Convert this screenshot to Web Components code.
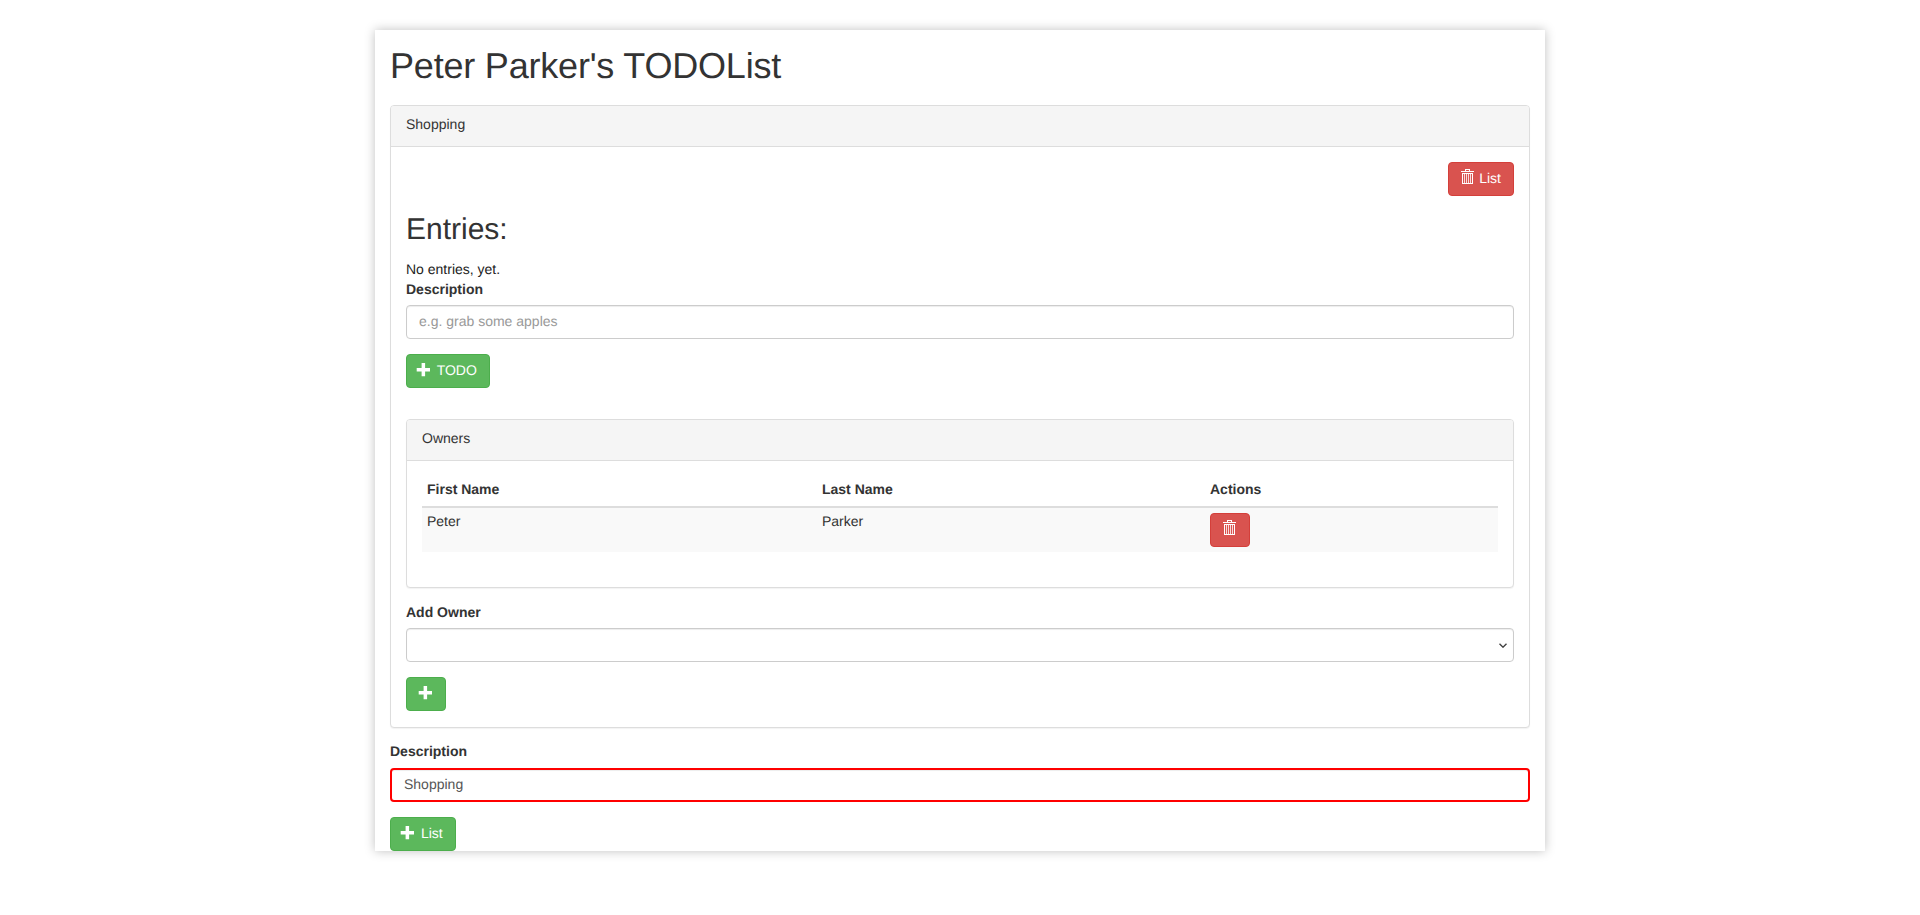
<!DOCTYPE html>
<html lang="en">
<head>
<meta charset="utf-8">
<title>TODOList</title>
<style>
    html, body {
        margin: 0;
        padding: 0;
        background: #fff;
        color: #333;
        font: 14px/20px "Liberation Sans", Arial, sans-serif;
        text-rendering: geometricPrecision;
    }
    body {
        box-sizing: border-box;
        min-height: 100vh;
        padding-top: 30px;
    }
</style>
</head>
<body>
<todo-page>
    <todo-panel heading="Shopping">
        <div style="display: flex; justify-content: flex-end;">
            <todo-button variant="danger"><todo-icon name="trash"></todo-icon> List</todo-button>
        </div>
        <todo-heading>Entries:</todo-heading>
        <div style="color: #222; margin-bottom: 1px;">No entries, yet.</div>
        <todo-field label="Description" placeholder="e.g. grab some apples"></todo-field>
        <todo-button variant="success"><todo-icon name="plus" shift></todo-icon> TODO</todo-button>
        <todo-panel heading="Owners" style="margin-top: 31px;">
            <owner-table first="Peter" last="Parker"></owner-table>
        </todo-panel>
        <todo-field label="Add Owner" type="select"></todo-field>
        <todo-button variant="success" style="margin-bottom: 1px;"><todo-icon name="plus"></todo-icon></todo-button>
    </todo-panel>
    <todo-field label="Description" value="Shopping" invalid></todo-field>
    <todo-button variant="success"><todo-icon name="plus" shift></todo-icon> List</todo-button>
</todo-page>

<script>
const ICONS = {
    plus: '<path transform="translate(-.3 1)" fill="currentColor" d="M4.9 0h3.5v4.9h4.9v3.5H8.4v4.9H4.9V8.4H0V4.9h4.9z"/>',
    trash: '<path fill="currentColor" fill-rule="evenodd" d="M4-1h5v2h4v1H0V1h4zM5 0v1h3V0zM1 3h11v11H1zM2 4v9h9V4z"/>' +
        '<path fill="currentColor" opacity=".8" d="M3 4h1v9H3zM5 4h1v9H5zM7 4h1v9H7zM9 4h1v9H9z"/>'
};

const CHEVRON = "data:image/svg+xml," + encodeURIComponent(
    '<svg xmlns="http://www.w3.org/2000/svg" width="8" height="5" viewBox="0 0 8 5"><path d="M.5.7 4 4.2 7.5.7" fill="none" stroke="#444" stroke-width="1.4"/></svg>'
);

class TodoIcon extends HTMLElement {
    constructor() {
        super();
        const shadowRoot = this.attachShadow({ mode: 'open' });
        shadowRoot.innerHTML = `
            <style>
                :host {
                    display: inline-block;
                    width: 14px;
                    height: 14px;
                    position: relative;
                    top: 2px;
                    line-height: 1;
                }
                :host([shift]) { left: -2px; }
                svg {
                    display: block;
                    overflow: visible;
                    margin-top: -1px;
                }
            </style>
            <svg width="14" height="15" viewBox="0 0 14 15">${ICONS[this.getAttribute('name')]}</svg>
        `;
    }
}

class TodoButton extends HTMLElement {
    constructor() {
        super();
        const shadowRoot = this.attachShadow({ mode: 'open' });
        shadowRoot.innerHTML = `
            <style>
                :host {
                    display: inline-block;
                    vertical-align: top;
                }
                button {
                    display: block;
                    box-sizing: border-box;
                    height: 34px;
                    margin: 0;
                    padding: 5px 12px 7px;
                    border: 1px solid;
                    border-radius: 4px;
                    color: #fff;
                    font: inherit;
                    text-rendering: inherit;
                    white-space: nowrap;
                    cursor: pointer;
                }
                :host([variant="success"]) button {
                    background: #5cb85c;
                    border-color: #4cae4c;
                }
                :host([variant="danger"]) button {
                    background: #d9534f;
                    border-color: #d43f3a;
                }
            </style>
            <button type="button"><slot></slot></button>
        `;
    }
}

class TodoHeading extends HTMLElement {
    constructor() {
        super();
        const shadowRoot = this.attachShadow({ mode: 'open' });
        shadowRoot.innerHTML = `
            <style>
                :host { display: block; }
                h3 {
                    margin: 17px 0 13px;
                    font-size: 30px;
                    font-weight: 500;
                    line-height: 33px;
                }
            </style>
            <h3><slot></slot></h3>
        `;
    }
}

class TodoField extends HTMLElement {
    constructor() {
        super();
        const shadowRoot = this.attachShadow({ mode: 'open' });
        const control = this.getAttribute('type') === 'select'
            ? '<select class="control"><option></option></select>'
            : '<input class="control" type="text">';
        shadowRoot.innerHTML = `
            <style>
                :host {
                    display: block;
                    margin-bottom: 15px;
                }
                label {
                    display: block;
                    margin: -1px 0 6px;
                    font-weight: 700;
                }
                :host([invalid]) label { margin: -2px 0 7px; }
                .control {
                    display: block;
                    box-sizing: border-box;
                    width: 100%;
                    height: 34px;
                    margin: 0;
                    padding: 5px 12px 7px;
                    background: #fff;
                    border: 1px solid #ccc;
                    border-radius: 4px;
                    box-shadow: inset 0 1px 1px rgba(0, 0, 0, .075);
                    color: #555;
                    font: inherit;
                    text-rendering: inherit;
                    outline: none;
                }
                select.control {
                    appearance: none;
                    background: #fff url("${CHEVRON}") no-repeat right 6px center;
                }
                .control::placeholder {
                    color: #999;
                    opacity: 1;
                }
                :host([invalid]) .control {
                    border: 2px solid #f00;
                    padding: 4px 12px 6px;
                }
            </style>
            <label>${this.getAttribute('label')}</label>
            ${control}
        `;
        const el = shadowRoot.querySelector('.control');
        if (this.hasAttribute('placeholder')) el.placeholder = this.getAttribute('placeholder');
        if (this.hasAttribute('value')) el.value = this.getAttribute('value');
    }
}

class TodoPanel extends HTMLElement {
    constructor() {
        super();
        const shadowRoot = this.attachShadow({ mode: 'open' });
        shadowRoot.innerHTML = `
            <style>
                :host {
                    display: block;
                    margin-bottom: 15px;
                    background: #fff;
                    border: 1px solid #ddd;
                    border-radius: 4px;
                    box-shadow: 0 1px 1px rgba(0, 0, 0, .05);
                }
                .heading {
                    padding: 8px 15px 12px;
                    background: #f5f5f5;
                    border-bottom: 1px solid #ddd;
                    border-radius: 3px 3px 0 0;
                }
                .body { padding: 15px; }
            </style>
            <div class="heading">${this.getAttribute('heading')}</div>
            <div class="body"><slot></slot></div>
        `;
    }
}

class OwnerTable extends HTMLElement {
    constructor() {
        super();
        const shadowRoot = this.attachShadow({ mode: 'open' });
        shadowRoot.innerHTML = `
            <style>
                :host {
                    display: block;
                    margin-bottom: 20px;
                }
                table {
                    width: 100%;
                    border-collapse: collapse;
                    border-spacing: 0;
                    table-layout: fixed;
                }
                th, td {
                    padding: 3px 5px 7px;
                    text-align: left;
                    vertical-align: top;
                }
                td.actions { padding: 5px; }
                th {
                    border-bottom: 2px solid #ddd;
                    font-weight: 700;
                }
                tbody tr { background: #f9f9f9; }
            </style>
            <table>
                <colgroup>
                    <col style="width: 395px">
                    <col style="width: 388px">
                    <col>
                </colgroup>
                <thead>
                    <tr><th>First Name</th><th>Last Name</th><th>Actions</th></tr>
                </thead>
                <tbody>
                    <tr>
                        <td>${this.getAttribute('first')}</td>
                        <td>${this.getAttribute('last')}</td>
                        <td class="actions"><todo-button variant="danger"><todo-icon name="trash"></todo-icon></todo-button></td>
                    </tr>
                </tbody>
            </table>
        `;
    }
}

class TodoPage extends HTMLElement {
    constructor() {
        super();
        const shadowRoot = this.attachShadow({ mode: 'open' });
        shadowRoot.innerHTML = `
            <style>
                :host {
                    display: block;
                    box-sizing: border-box;
                    width: 1170px;
                    margin: 0 auto;
                    padding: 0 15px;
                    background: #fff;
                    box-shadow: 0 0 10px rgba(0, 0, 0, .25);
                }
                h1 {
                    margin: 0;
                    padding: 16px 0 19px;
                    font-size: 36px;
                    font-weight: 500;
                    line-height: 40px;
                    letter-spacing: -.2px;
                }
                ::slotted(todo-button) { display: block; width: max-content; }
            </style>
            <h1>Peter Parker's TODOList</h1>
            <slot></slot>
        `;
    }
}

customElements.define('todo-icon', TodoIcon);
customElements.define('todo-button', TodoButton);
customElements.define('todo-heading', TodoHeading);
customElements.define('todo-field', TodoField);
customElements.define('todo-panel', TodoPanel);
customElements.define('owner-table', OwnerTable);
customElements.define('todo-page', TodoPage);
</script>
</body>
</html>
